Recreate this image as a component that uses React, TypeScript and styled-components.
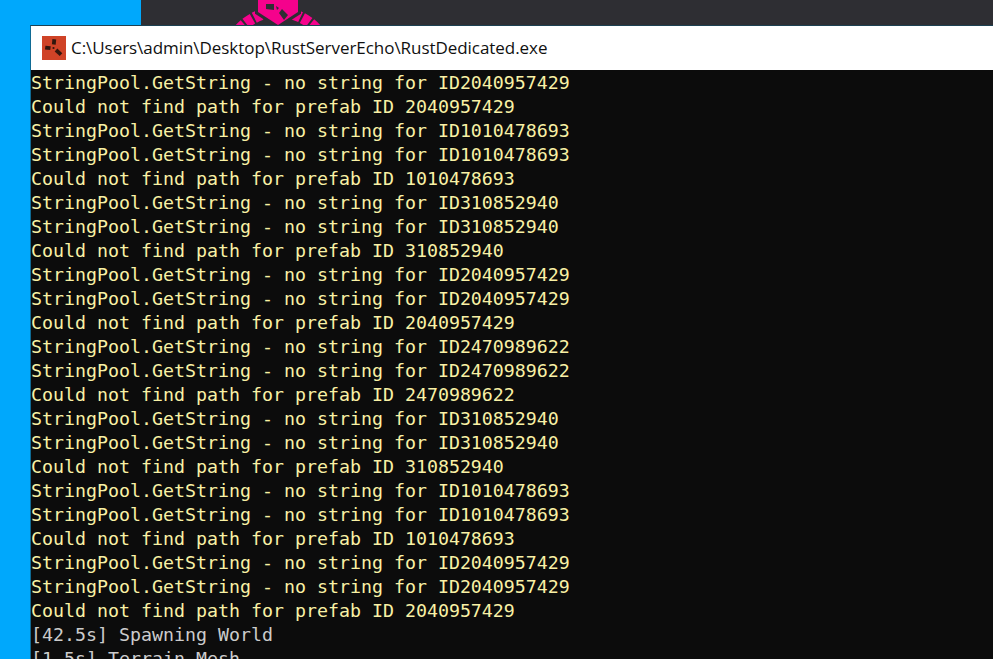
import React from "react";
import styled, { createGlobalStyle } from "styled-components";

const Global = createGlobalStyle`
  html, body { margin: 0; padding: 0; background: #00a8fc; }
  #root { width: 993px; height: 659px; overflow: hidden; }
`;

const Desktop = styled.div`
  position: relative;
  width: 993px;
  height: 659px;
  overflow: hidden;
  display: grid;
  grid-template-columns: 141px 1fr;
  background: #00a8fc;
`;

const Wallpaper = styled.div`
  background: #2e2e33;
  height: 30px;
`;

const Logo = styled.svg`
  position: absolute;
  left: 225px;
  top: 0;
`;

const Window = styled.div`
  position: absolute;
  left: 30px;
  top: 25px;
  right: 0;
  bottom: 0;
  display: flex;
  flex-direction: column;
  border-left: 1px solid #0f6a94;
  border-top: 1px solid #1c4152;
`;

const TitleBar = styled.div`
  height: 44px;
  flex: none;
  background: #fff;
  display: flex;
  align-items: center;
  gap: 5px;
  padding-left: 11px;
  color: #101010;
  font: 17px/20px "Open Sans", "Noto Sans", sans-serif;
  letter-spacing: -0.05px;
`;

const Console = styled.div`
  flex: 1;
  background: #0c0c0c;
  overflow: hidden;
  padding-top: 1px;
  font-family: "DejaVu Sans Mono", monospace;
  font-size: 18.27px;
  line-height: 24px;
  white-space: pre;
`;

const Line = styled.div<{ $tone: "warn" | "info" }>`
  color: ${(p) => (p.$tone === "warn" ? "#f9f1a5" : "#cccccc")};
  height: 24px;
`;

const AppIcon = () => (
  <svg width="24" height="24" viewBox="0 0 24 24">
    <defs>
      <filter id="soft" x="-20%" y="-20%" width="140%" height="140%">
        <feGaussianBlur stdDeviation="0.45" />
      </filter>
    </defs>
    <rect width="24" height="24" fill="#cf4327" />
    <g stroke="#33160f" strokeWidth="3.8" filter="url(#soft)">
      <line x1="11.8" y1="8.5" x2="12.3" y2="3.2" />
      <line x1="8.5" y1="12.2" x2="3.2" y2="11.6" />
      <line x1="14" y1="14" x2="19" y2="18.6" />
    </g>
    <circle cx="11.5" cy="12" r="1.1" fill="#33160f" />
  </svg>
);

const A = "StringPool.GetString - no string for ID";
const B = "Could not find path for prefab ID ";
const ids: [string, number][] = [
  ["2040957429", 1],
  ["1010478693", 2],
  ["310852940", 2],
  ["2040957429", 2],
  ["2470989622", 2],
  ["310852940", 2],
  ["1010478693", 2],
  ["2040957429", 2],
];

const warnings: string[] = ids.flatMap(([id, n]) => [
  ...Array.from({ length: n }, () => A + id),
  B + id,
]);

export default function App() {
  return (
    <Desktop>
      <Global />
      <div />
      <Wallpaper />
      <Logo width="110" height="28" viewBox="0 0 110 28">
        <circle
          cx="53"
          cy="64"
          r="52"
          fill="none"
          stroke="#f5028c"
          strokeWidth="11"
          strokeDasharray="8 2"
        />
        <path d="M33 -2 L73 -2 L73 12 L53 25 L33 12 Z" fill="#f5028c" stroke="#2e2e33" strokeWidth="6" paintOrder="stroke" />
        <path d="M41 4 L49 4 L49 10 L41 9 Z M51 6 L54 8 L52 10 Z M57 9 L63 15 L59 20 L54 13 Z" fill="#2e2e33" />
      </Logo>
      <Window>
        <TitleBar>
          <AppIcon />
          C:\Users\admin\Desktop\RustServerEcho\RustDedicated.exe
        </TitleBar>
        <Console>
          {warnings.map((t, i) => (
            <Line key={i} $tone="warn">{t}</Line>
          ))}
          <Line $tone="info">[42.5s] Spawning World</Line>
          <Line $tone="info">[1.5s] Terrain Mesh</Line>
        </Console>
      </Window>
    </Desktop>
  );
}
